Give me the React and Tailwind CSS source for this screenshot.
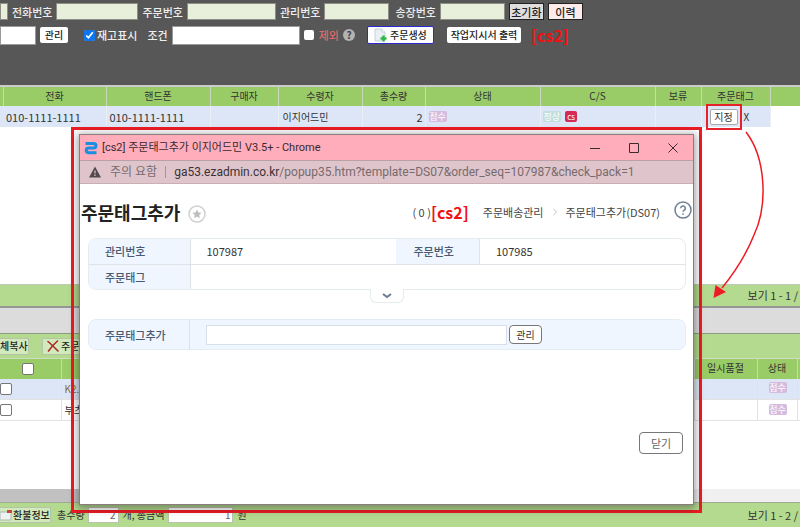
import { useState } from "react";

const ORDER_COLUMNS = [
  { label: "", width: "w-[3px]" },
  { label: "전화", width: "w-[103px]" },
  { label: "핸드폰", width: "w-[104px]" },
  { label: "구매자", width: "w-[68px]" },
  { label: "수령자", width: "w-[84px]" },
  { label: "총수량", width: "w-[63px]" },
  { label: "상태", width: "w-[115px]" },
  { label: "C/S", width: "w-[115px]" },
  { label: "보류", width: "w-[46px]" },
  { label: "주문태그", width: "w-[69px]" },
];

const PRODUCTS = [
  { id: 1, name: "K2.", tone: "bg-[#dde6f6]", nameTone: "text-[#8a6a2a]" },
  { id: 2, name: "부츠", tone: "bg-white", nameTone: "text-[#333]" },
];

const greenField = "h-[17px] shrink-0 border border-[#8b8f86] bg-[#e8f0dc] text-[11px]";
const whiteField = "h-[19px] shrink-0 border border-[#9a9a9a] bg-white text-[11px]";
const smallButton = "h-4 shrink-0 rounded-xs bg-white text-[10px] leading-4 font-medium text-[#222]";

export default function App() {
  return (
    <div className="relative flex min-h-screen flex-col overflow-hidden bg-white font-['Noto_Sans_CJK_KR',sans-serif] text-[11px] leading-4 text-[#333]">
      <SearchPanel />
      <OrderGrid />
      <Pager text="보기 1 - 1 /" />
      <div className="h-7 border-t-2 border-b border-t-[#969696] border-b-[#8d9b80] bg-[#dcdcdc]" />
      <ProductGrid />
      <TagPopup />
      <Arrow />
    </div>
  );
}

function SearchPanel() {
  const [showStock, setShowStock] = useState(true);

  return (
    <form className="flex h-[85px] flex-col gap-[5px] overflow-hidden bg-[#575757] pt-[3px] font-medium whitespace-nowrap text-[#eee]">
      <div className="flex h-[17px] items-center gap-1">
        <input aria-label="검색어" className={`w-2 ${greenField}`} />
        <label htmlFor="phone">전화번호</label>
        <input id="phone" className={`w-[82px] ${greenField}`} />
        <label htmlFor="order-no">주문번호</label>
        <input id="order-no" className={`w-[89px] ${greenField}`} />
        <label htmlFor="manage-no">관리번호</label>
        <input id="manage-no" className={`mr-[2px] w-[65px] ${greenField}`} />
        <label htmlFor="invoice-no">송장번호</label>
        <input id="invoice-no" className={`w-[65px] ${greenField}`} />
        <button type="button" className="h-[17px] w-[35px] shrink-0 border border-[#222] bg-[#dedede] leading-[14px] text-[#222]">
          초기화
        </button>
        <button type="button" className="h-[17px] w-[35px] shrink-0 border border-[#222] bg-[#fdeaea] leading-[14px] text-[#222]">
          이력
        </button>
      </div>
      <div className="flex h-5 items-center">
        <input aria-label="조건 값" className={`w-9 ${whiteField}`} />
        <button type="button" className={`ml-1 w-7 ${smallButton}`}>
          관리
        </button>
        <label className="ml-4 flex items-center gap-[2px]">
          <input
            type="checkbox"
            className="size-[11px] accent-[#0b76ef]"
            checked={showStock}
            onChange={e => setShowStock(e.target.checked)}
          />
          재고표시
        </label>
        <label htmlFor="condition" className="ml-[10px]">
          조건
        </label>
        <input id="condition" className={`ml-1 w-[128px] ${whiteField}`} />
        <label className="ml-1 flex items-center gap-[5px] text-[#dd6b6b]">
          <input type="checkbox" className="size-[10px] appearance-none rounded-xs bg-white" />
          제외
        </label>
        <span className="ml-1 flex size-3 items-center justify-center rounded-full bg-[#b3b3b3] text-[10px] leading-3 font-bold text-[#444]">
          ?
        </span>
        <button
          type="button"
          className="ml-3 flex h-[18px] w-[67px] shrink-0 items-center gap-[3px] rounded-xs border border-[#2a2ad0] bg-white pl-[6px] text-[10px] text-[#222]"
        >
          <NewDocIcon />
          주문생성
        </button>
        <button type="button" className={`ml-[13px] w-[74px] ${smallButton}`}>
          작업지시서 출력
        </button>
        <strong className="ml-[10px] text-base text-[#f01212]">[cs2]</strong>
      </div>
    </form>
  );
}

const orderCell = "border-r border-[#e9eef7] bg-[#dde6f6] py-0";

function OrderGrid() {
  return (
    <div className="h-[199px]">
      <table className="w-full table-fixed border-collapse text-[10px] whitespace-nowrap">
        <thead>
          <tr className="h-5 border-t-2 border-[#cbcbcb] bg-[#99cc66]">
            {ORDER_COLUMNS.map(col => (
              <th key={col.label} className={`border-r border-[#cbd8bd] px-0 pt-0 pb-[2px] leading-4 font-normal ${col.width}`}>
                {col.label}
              </th>
            ))}
            <th className="p-0" />
          </tr>
        </thead>
        <tbody>
          <tr className="h-[21px]">
            <td className="bg-[#dde6f6] p-0" />
            <td className={`pl-[3px] text-[11px] leading-4 ${orderCell}`}>010-1111-1111</td>
            <td className={`pl-[3px] text-[11px] leading-4 ${orderCell}`}>010-1111-1111</td>
            <td className={orderCell} />
            <td className={`pl-1 ${orderCell}`}>이지어드민</td>
            <td className={`pr-[2px] text-right text-[11px] leading-4 ${orderCell}`}>2</td>
            <td className={`pl-[3px] ${orderCell}`}>
              <StatusTag />
            </td>
            <td className={`pl-[2px] ${orderCell}`}>
              <div className="flex gap-1">
                <span className="rounded-xs bg-[#bfe0df] px-px text-[9px] leading-[11px] text-white">정상</span>
                <span className="w-3 rounded-xs bg-[#d42a55] text-center text-[8px] leading-[11px] text-white">cs</span>
              </div>
            </td>
            <td className={orderCell} />
            <td className={orderCell}>
              <div className="flex h-[21px] items-center pl-2">
                <span className="relative flex">
                  <button type="button" className="h-4 w-7 rounded-xs border border-[#a9a9a9] bg-white leading-[14px]">
                    지정
                  </button>
                  <span className="pointer-events-none absolute -inset-x-1 -inset-y-[5px] border-2 border-[#e62129]" />
                </span>
                <span className="ml-[6px]">X</span>
              </div>
            </td>
            <td />
          </tr>
        </tbody>
      </table>
    </div>
  );
}

function StatusTag() {
  return (
    <span className="block w-[18px] rounded-xs bg-[#d5bcdf] text-center text-[9px] leading-[11px] text-white">접수</span>
  );
}

function Pager({ text }) {
  return (
    <div className="h-[22px] border-t border-[#bfc9b5] bg-[#b4da90] text-right leading-5">
      <span className="pr-[2px]">{text}</span>
    </div>
  );
}

const gridCheck = "block size-3 appearance-none rounded-xs border border-[#767676] bg-white";
const totalField = "h-4 border border-[#b8c4ac] bg-white px-[2px] text-right text-[#666]";

function ProductGrid() {
  return (
    <section className="flex flex-1 flex-col">
      <div className="flex h-6 items-center gap-[13px] bg-[#b4da90] text-[10px] font-medium whitespace-nowrap text-[#222]">
        <button type="button" className="flex h-[17px] w-[29px] items-center border border-l-0 border-[#b5c3a6] bg-[#d2e9bc]">
          체복사
        </button>
        <button type="button" className="flex h-[17px] w-[70px] items-center gap-[2px] border border-[#b5c3a6] bg-[#d2e9bc] pl-1">
          <svg viewBox="0 0 12 12" className="size-3 shrink-0" fill="none" stroke="#ad2727" strokeLinecap="round">
            <path d="M1 1.5C4 4 8 8 11 11" strokeWidth="1.6" />
            <path d="M10.500 1C7 4 4 7.500 1.500 11" strokeWidth="1.6" />
          </svg>
          주문삭제
        </button>
      </div>
      <table className="w-full table-fixed border-collapse text-[10px] whitespace-nowrap">
        <thead>
          <tr className="h-5 border-t border-[#cfdcc2] bg-[#99cc66]">
            <th className="w-[61px] border-r border-[#cbd8bd] p-0">
              <input type="checkbox" aria-label="전체 선택" className={`mr-auto ml-[22px] ${gridCheck}`} />
            </th>
            <th className="border-r border-[#cbd8bd] p-0" />
            <th className="w-[63px] border-r border-[#cbd8bd] px-0 pt-0 pb-[2px] leading-4 font-normal">일시품절</th>
            <th className="w-10 border-r border-[#cbd8bd] px-0 pt-0 pb-[2px] leading-4 font-normal">상태</th>
            <th className="w-[3px] p-0" />
          </tr>
        </thead>
        <tbody>
          {PRODUCTS.map(product => (
            <tr key={product.id} className={`h-[21px] border-b border-[#e2e2e2] ${product.tone}`}>
              <td className="border-r border-[#e2e2e2] p-0">
                <input type="checkbox" aria-label={product.name} className={gridCheck} />
              </td>
              <td className={`border-r border-[#e2e2e2] py-0 pr-0 pl-[3px] ${product.nameTone}`}>{product.name}</td>
              <td className="border-r border-[#e2e2e2] p-0" />
              <td className="border-r border-[#e2e2e2] pt-0 pr-0 pb-[2px] pl-[11px]">
                <StatusTag />
              </td>
              <td className="p-0" />
            </tr>
          ))}
        </tbody>
      </table>
      <div className="flex-1" />
      <div className="flex h-[13px]">
        <div className="flex-1 bg-[#c1c1c1]" />
        <div className="w-[110px] bg-[#f0f0f0]" />
      </div>
      <div className="flex h-[25px] items-center border-t border-[#9fa994] bg-[#b4da90] text-[10px] whitespace-nowrap">
        <button type="button" className="flex h-4 w-[51px] items-center gap-px border border-l-0 border-[#b5c3a6] bg-[#d2e9bc] font-medium text-[#222]">
          <svg viewBox="0 0 12 12" className="size-3 shrink-0">
            <path d="M0 3h11v8H0z" fill="#eef3f1" stroke="#a9b8b0" />
            <path d="M7 1h5v3H7z" fill="#c8463c" />
          </svg>
          환불정보
        </button>
        <label htmlFor="total-count" className="ml-[6px]">
          총수량
        </label>
        <input id="total-count" readOnly value="2" className={`ml-[3px] w-[31px] ${totalField}`} />
        <span className="ml-1">개,&nbsp;</span>
        <label htmlFor="total-price">총금액</label>
        <input id="total-price" readOnly value="1" className={`ml-1 w-[65px] ${totalField}`} />
        <span className="ml-1">원</span>
        <span className="ml-auto pr-[2px] text-[11px]">보기 1 - 2 /</span>
      </div>
    </section>
  );
}

const popupHead = "border-r border-[#dfe3e8] bg-[#eff6ff] font-medium text-[#4a5a72]";

function TagPopup() {
  const [expanded, setExpanded] = useState(false);

  return (
    <div className="absolute top-[127px] right-[98px] left-[71px] border-[3px] border-[#ed1c24] px-[5px] pt-1 pb-[5px]">
      <div role="dialog" aria-label="주문태그추가" className="border border-[#8b7c80] bg-white shadow-[0_2px_8px_2px_rgba(0,0,0,0.35)]">
        <div className="flex h-[25px] items-center bg-[#ffadbb] font-[Roboto,'Noto_Sans_CJK_KR',sans-serif] text-[11px] text-[#3b2a2e]">
          <svg viewBox="0 0 14 14" className="ml-1 size-[14px] shrink-0" fill="none" stroke="#1a8ee0" strokeWidth="3" strokeLinejoin="round">
            <path d="M1.500 2.500H9.500q2.500 0 2.500 2.200t-2.500 2.200H5q-2.800 0-2.800 2.400t2.800 2.400H12.500" />
          </svg>
          <span className="ml-1">[cs2] 주문태그추가 이지어드민 V3.5+ - Chrome</span>
          <div className="ml-auto flex items-center gap-[27px] pr-[14px]">
            <button type="button" aria-label="최소화">
              <WindowGlyph d="M1 6.500h10" />
            </button>
            <button type="button" aria-label="최대화">
              <WindowGlyph d="M1.500 1.500h9v9h-9z" />
            </button>
            <button type="button" aria-label="창 닫기">
              <WindowGlyph d="M1.500 1.500l9 9M10.500 1.500l-9 9" />
            </button>
          </div>
        </div>
        <div className="flex h-6 items-center border-t border-b border-t-[#b9a1a7] border-b-[#c9b0b5] bg-[#dfc5cb] font-[Roboto,'Noto_Sans_CJK_KR',sans-serif] text-xs text-[#776a6d]">
          <svg viewBox="0 0 12 12" className="mx-[9px] size-3 shrink-0">
            <path d="M6 .5L12 11.500H0z" fill="#54494c" />
            <path d="M6 4.500v3M6 8.500v1.500" stroke="#dfc5cb" strokeWidth="1.2" />
          </svg>
          <span>주의 요함</span>
          <span className="mx-2 h-3 w-px bg-[#a8959a]" />
          <span>
            <span className="text-[#3b3235]">ga53.ezadmin.co.kr</span>/popup35.htm?template=DS07&amp;order_seq=107987&amp;check_pack=1
          </span>
        </div>
        <div className="flex h-[54px] items-center pt-[2px]">
          <h1 className="pl-px text-lg leading-6 font-bold text-[#222]">주문태그추가</h1>
          <button type="button" aria-label="즐겨찾기" className="mt-1 ml-2">
            <svg viewBox="0 0 18 18" className="size-[18px]">
              <circle cx="9" cy="9" r="8" fill="none" stroke="#cfcfcf" strokeWidth="1.5" />
              <path d="M9 4.500l1.400 3 3.200.3-2.400 2.200.7 3.200L9 11.500l-2.900 1.700.7-3.200-2.400-2.200 3.200-.3z" fill="#bdbdbd" />
            </svg>
          </button>
          <nav className="ml-auto flex items-center text-[#444]">
            <span>( 0 )</span>
            <strong className="text-base text-[#f01212]">[cs2]</strong>
            <a href="#delivery" className="ml-[14px]">
              주문배송관리
            </a>
            <svg viewBox="0 0 6 10" className="mx-2 h-2 w-[6px]" fill="none" stroke="#bbb" strokeWidth="1.2">
              <path d="M1 1l4 4-4 4" />
            </svg>
            <a href="#tag">주문태그추가(DS07)</a>
          </nav>
          <button type="button" aria-label="도움말" className="mr-px mb-1 ml-[14px]">
            <svg viewBox="0 0 18 18" className="size-[18px]" fill="none" stroke="#6f7f96" strokeWidth="1.5">
              <circle cx="9" cy="9" r="8" />
              <path d="M6.700 7.200a2.300 2.300 0 1 1 3.300 2.100q-1 .6-1 1.500M9 12.300v1.500" />
            </svg>
          </button>
        </div>
        <div className="pr-[7px] pl-2">
          <div className="overflow-hidden rounded-lg border border-[#e4ecee]">
            <table className="w-full table-fixed border-collapse text-left">
              <tbody>
                <tr className="h-[25px] border-b border-[#dfe3e8]">
                  <th className={`w-[101px] pl-4 ${popupHead}`}>관리번호</th>
                  <td className="pl-4">107987</td>
                  <th className={`w-[84px] pl-[18px] ${popupHead}`}>주문번호</th>
                  <td className="pl-4">107985</td>
                </tr>
                <tr className="h-[25px]">
                  <th className={`pl-4 ${popupHead}`}>주문태그</th>
                  <td colSpan={3} />
                </tr>
              </tbody>
            </table>
          </div>
          <button
            type="button"
            aria-label="펼치기"
            aria-expanded={expanded}
            onClick={() => setExpanded(!expanded)}
            className="mx-auto -mt-px flex h-[14px] w-[34px] items-center justify-center rounded-b-md border border-t-0 border-[#e4ecee] bg-white"
          >
            <svg viewBox="0 0 10 6" className="h-[6px] w-[10px]" fill="none" stroke="#6d7b90" strokeWidth="2">
              <path d="M1 1l4 3 4-3" />
            </svg>
          </button>
          <div className="mt-4 flex h-[31px] items-center rounded-lg border border-[#e4ecf4] bg-[#eff6ff]">
            <label htmlFor="tag" className="flex h-full w-[101px] items-center border-r border-[#d8e0ea] pl-4 font-medium text-[#4a5a72]">
              주문태그추가
            </label>
            <input id="tag" className="ml-4 h-5 w-[301px] border border-[#d5e0ec] bg-white px-1" />
            <button type="button" className="ml-[2px] h-[19px] w-[33px] rounded-sm border border-[#777] bg-white text-[10px] leading-4">
              관리
            </button>
          </div>
        </div>
        <div className="flex justify-end pt-[82px] pr-[10px] pb-[50px]">
          <button type="button" className="h-[22px] w-11 rounded-sm border border-[#777] bg-white text-[#666]">
            닫기
          </button>
        </div>
      </div>
    </div>
  );
}

function WindowGlyph({ d }) {
  return (
    <svg viewBox="0 0 12 12" className="size-3" fill="none" stroke="#3b2a2e">
      <path d={d} />
    </svg>
  );
}

function NewDocIcon() {
  return (
    <svg viewBox="0 0 13 14" className="h-[14px] w-[13px] shrink-0">
      <path d="M1 1h7l3 3v9H1z" fill="#e9eff3" stroke="#bccad3" strokeWidth=".8" />
      <path d="M8 1v3h3" fill="#fff" stroke="#bccad3" strokeWidth=".8" />
      <path d="M9.500 7.500v6M6.500 10.500h6" stroke="#2fb84a" strokeWidth="2.400" />
    </svg>
  );
}

function Arrow() {
  return (
    <svg viewBox="0 0 60 170" className="pointer-events-none absolute top-[130px] right-[32px] h-[170px] w-[60px]">
      <path d="M38 2C58 28 60 75 46 105C38 125 27 142 14 158" fill="none" stroke="#ed1c24" strokeWidth="1.500" />
      <path d="M5.500 168L7.500 155L18 162z" fill="#ed1c24" />
    </svg>
  );
}
